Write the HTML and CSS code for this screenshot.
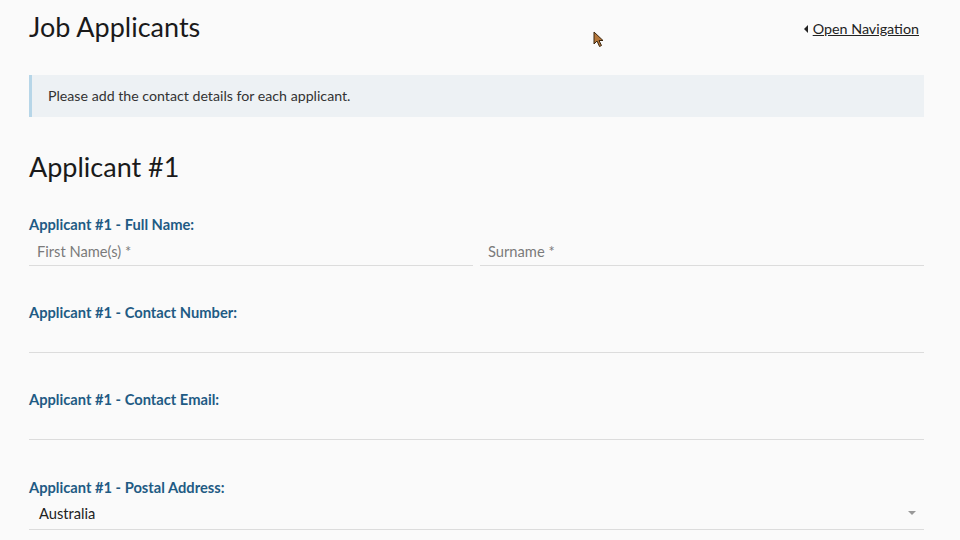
FILE: index.html
```html
<!DOCTYPE html>
<html>
<head>
<title>Job Applicants</title>
<link rel="stylesheet" href="styles.css">
</head>
<body>
    <div class="page">
        <div class="cabecera">
            <h1>Job Applicants</h1>
            <a class="abrir-nav" href="#"><span class="triangulo"></span><span class="enlace">Open Navigation</span></a>
        </div>

        <div class="aviso">Please add the contact details for each applicant.</div>

        <h2>Applicant #1</h2>

        <div class="campo">
            <label class="etiqueta">Applicant #1 - Full Name:</label>
            <div class="fila">
                <input class="entrada" type="text" placeholder="First Name(s) *">
                <input class="entrada" type="text" placeholder="Surname *">
            </div>
        </div>

        <div class="campo alto">
            <label class="etiqueta">Applicant #1 - Contact Number:</label>
            <input class="entrada" type="text">
        </div>

        <div class="campo alto">
            <label class="etiqueta">Applicant #1 - Contact Email:</label>
            <input class="entrada" type="text">
        </div>

        <div class="campo alto postal">
            <label class="etiqueta">Applicant #1 - Postal Address:</label>
            <div class="selector">
                <span>Australia</span>
                <span class="flecha"></span>
            </div>
        </div>
    </div>

    <!-- puntero del raton -->
    <svg class="cursor" width="14" height="18" viewBox="0 0 14 18">
        <path d="M1 1 L1 13 L4 10 L6.5 15.5 L8.5 14.5 L6 9.5 L10 9.5 Z" fill="#b5773a" stroke="#3a2610" stroke-width="1"/>
    </svg>
</body>
</html>
```

FILE: styles.css
```css
body {
    margin: 0;
    background-color: #fafafa;
    font-family: Lato, "Liberation Sans", sans-serif;
    color: #222;
}

.page {
    padding: 0 36px 0 29px;
}

.cabecera {
    display: flex;
    justify-content: space-between;
    align-items: center;
    height: 53px;
}

h1 {
    margin: 0;
    font-size: 27px;
    font-weight: 400;
    color: #1a1a1a;
}

.abrir-nav {
    display: flex;
    align-items: center;
    gap: 5px;
    color: #222;
    font-size: 14.3px;
    text-decoration: none;
    margin-top: 4px;
    margin-right: 5px;
}

.enlace {
    text-decoration: underline;
}

.triangulo {
    width: 0;
    height: 0;
    border-top: 4px solid transparent;
    border-bottom: 4px solid transparent;
    border-right: 4px solid #222;
}

.aviso {
    margin-top: 22px;
    background-color: #edf1f4;
    border-left: 3px solid #b7d6e8;
    padding: 13px 16px;
    font-size: 14.2px;
    color: #333;
    line-height: 16px;
}

h2 {
    margin: 33px 0 0 0;
    font-size: 27px;
    font-weight: 400;
    color: #1a1a1a;
}

.campo {
    margin-top: 32px;
}

.campo.alto {
    margin-top: 37px;
}

.campo.postal {
    margin-top: 38px;
}

.etiqueta {
    display: block;
    font-size: 14.7px;
    font-weight: 700;
    color: #1f5b84;
    margin-bottom: 5px;
}

.fila {
    display: flex;
    gap: 7px;
}

.entrada {
    display: block;
    width: 100%;
    box-sizing: border-box;
    border: none;
    border-bottom: 1px solid #dcdcdc;
    background: transparent;
    font-family: Lato, "Liberation Sans", sans-serif;
    font-size: 14.7px;
    padding: 4px 8px 6px 8px;
    height: 28px;
    outline: none;
}

.campo.alto .entrada {
    height: 27px;
}

.entrada::placeholder {
    color: #7a7a7a;
}

.selector {
    display: flex;
    justify-content: space-between;
    align-items: center;
    border-bottom: 1px solid #dcdcdc;
    padding: 3px 8px 7px 10px;
    font-size: 14.7px;
    color: #222;
}

.flecha {
    width: 0;
    height: 0;
    border-left: 4px solid transparent;
    border-right: 4px solid transparent;
    border-top: 4px solid #999;
}

.cursor {
    position: absolute;
    left: 593px;
    top: 31px;
}
```
